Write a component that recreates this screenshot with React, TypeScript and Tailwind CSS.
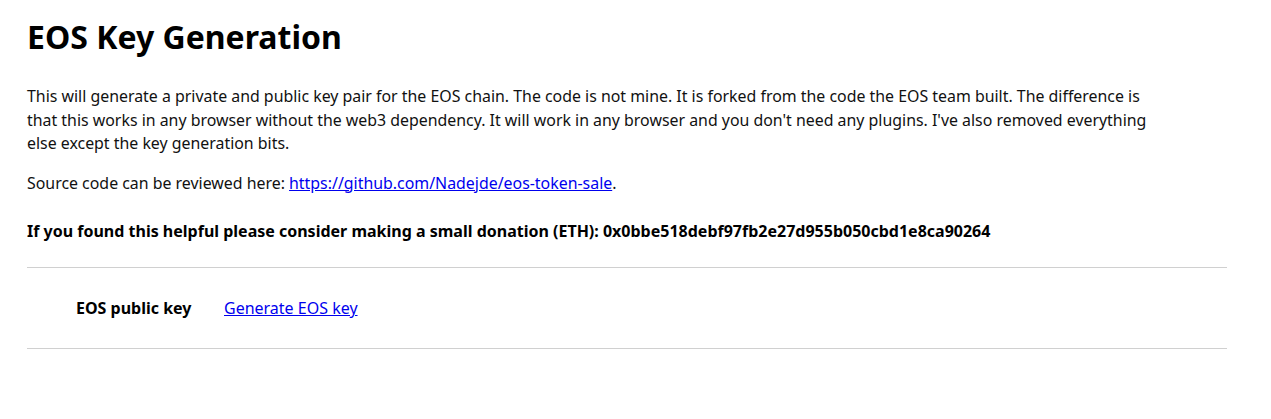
export default function App() {
  return (
    <div className="min-h-screen bg-white font-['Noto_Sans',sans-serif] text-[#111]">
      <div className="w-[1200px] ml-[27px] pt-[15px]">
        <h1 className="text-[32px] font-bold leading-[44px] text-black">EOS Key Generation</h1>

        <p className="mt-[26px] pr-[60px] text-[15.9px] leading-[23.5px]">
          This will generate a private and public key pair for the EOS chain. The code is not mine. It is forked
          from the code the EOS team built. The difference is that this works in any browser without the web3
          dependency. It will work in any browser and you don't need any plugins. I've also removed everything
          else except the key generation bits.
        </p>

        <p className="mt-[16px] text-[15.9px] leading-[23.5px]">
          Source code can be reviewed here:{" "}
          <a href="#" className="text-[#0000ee] underline">
            https://github.com/Nadejde/eos-token-sale
          </a>
          .
        </p>

        <p className="mt-[24px] text-[16px] leading-[24px] font-bold text-black">
          If you found this helpful please consider making a small donation (ETH):
          0x0bbe518debf97fb2e27d955b050cbd1e8ca90264
        </p>

        <hr className="mt-[24px] border-0 border-t border-[#d0d0d0]" />

        <div className="flex items-center h-[80px] pl-[49px] text-[16px]">
          <span className="w-[148px] font-bold text-black">EOS public key</span>
          <a href="#" className="text-[#0000ee] underline">
            Generate EOS key
          </a>
        </div>

        <hr className="border-0 border-t border-[#d0d0d0]" />
      </div>
    </div>
  );
}
